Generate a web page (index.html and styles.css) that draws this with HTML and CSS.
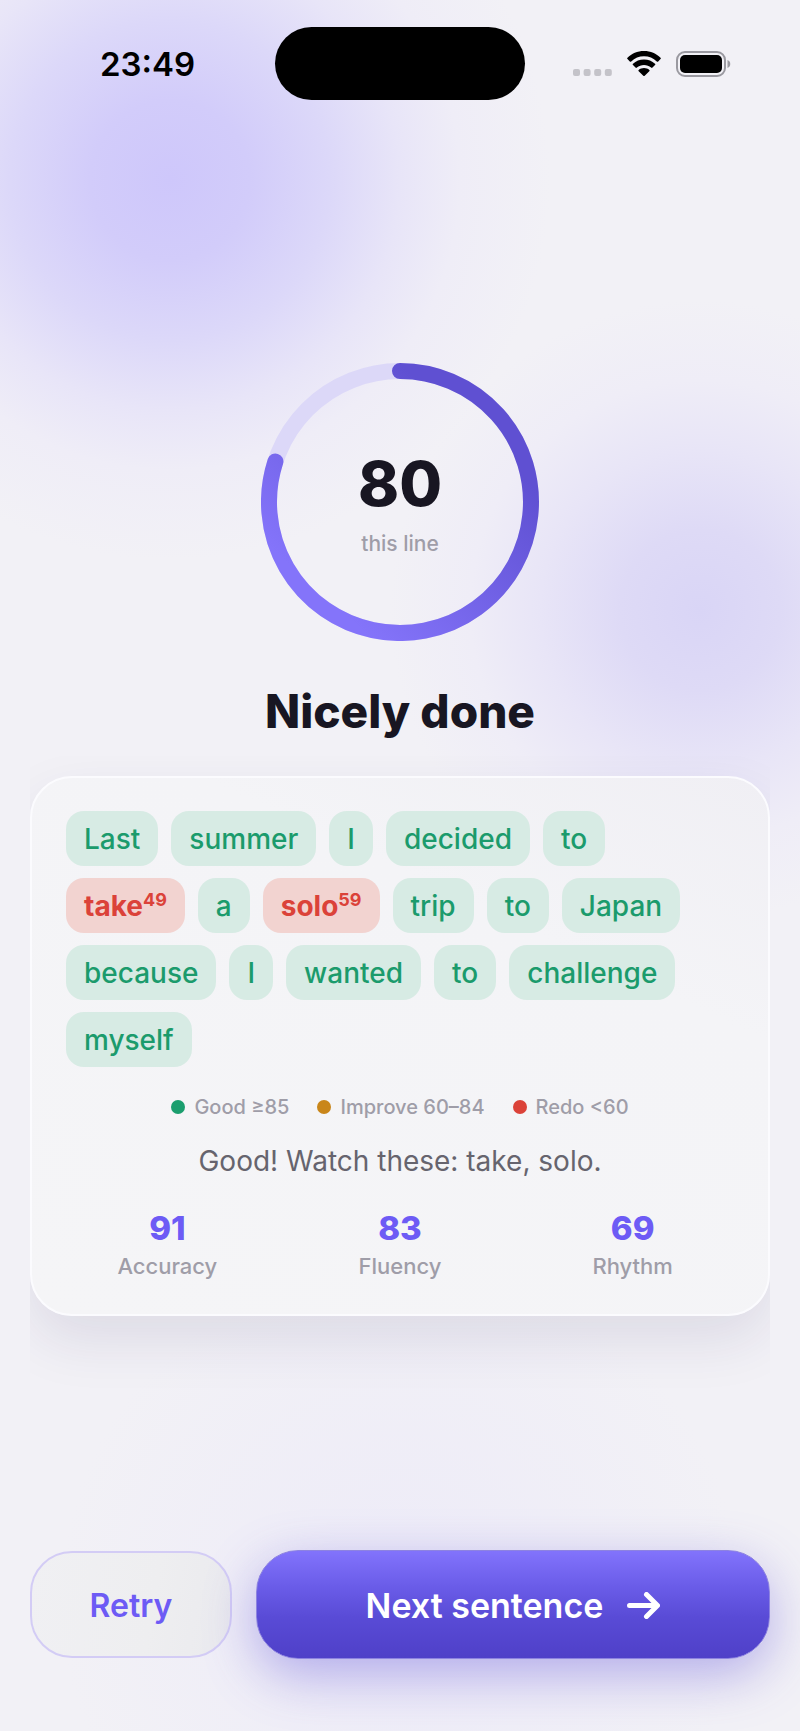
FILE: index.html
```html
<!DOCTYPE html>
<html lang="en">
<head>
<meta charset="utf-8">
<meta name="viewport" content="width=device-width, initial-scale=1">
<title>Line result</title>
<link rel="stylesheet" href="styles.css">
</head>
<body>
<div class="screen">
  <header class="status">
    <time class="status-time">23:49</time>
    <div class="island"></div>
    <div class="status-icons">
      <svg class="signal" viewBox="0 0 39 7" aria-hidden="true"><g fill="#c4c3c9"><rect width="7" height="7" rx="2"/><rect x="10.6" width="7" height="7" rx="2"/><rect x="21.2" width="7" height="7" rx="2"/><rect x="31.8" width="7" height="7" rx="2"/></g></svg>
      <svg class="wifi" viewBox="0 0 34 25" aria-hidden="true"><path d="M17 0C23.600 0 29.400 2.600 33.500 6.700Q34.200 7.400 33.500 8.100L31.200 10.400Q30.500 11.100 29.800 10.400C26.400 7.200 21.900 5.300 17 5.300S7.600 7.200 4.200 10.400Q3.500 11.100 2.800 10.400L.5 8.100Q-.2 7.400 .5 6.700C4.600 2.600 10.400 0 17 0ZM17 8.500C21.300 8.500 25.100 10.100 28 12.700Q28.700 13.400 28 14.100L25.500 16.600Q24.800 17.200 24.100 16.600C22.200 14.900 19.700 13.900 17 13.900S11.800 14.900 9.900 16.600Q9.200 17.200 8.500 16.600L6 14.100Q5.300 13.400 6 12.700C8.900 10.100 12.700 8.500 17 8.500ZM17 17C19 17 20.900 17.700 22.300 18.900Q23 19.600 22.300 20.300L17.700 24.700Q17 25.300 16.300 24.700L11.700 20.300Q11 19.600 11.700 18.900C13.100 17.700 15 17 17 17Z"/></svg>
      <svg class="battery" viewBox="0 0 55 26" aria-hidden="true"><rect x="1" y="1" width="48" height="24" rx="8" fill="none" stroke="#9a99a0" stroke-width="2"/><rect x="4" y="4" width="42" height="18" rx="5"/><path d="M51.500 9C55.200 10.200 55.200 15.800 51.500 17Z" fill="#9a99a0"/></svg>
    </div>
  </header>

  <main class="result">
    <section class="ring" aria-label="Score 80">
      <svg class="ring-art" viewBox="0 0 278 278" aria-hidden="true">
        <defs><linearGradient id="arc" gradientUnits="userSpaceOnUse" x1="65" y1="235" x2="215" y2="70"><stop offset="0" stop-color="#8474fa"/><stop offset="1" stop-color="#5f50d2"/></linearGradient></defs>
        <circle cx="139" cy="139" r="131" fill="none" stroke="#dcd8f8" stroke-width="16"/>
        <path d="M139 8A131 131 0 1 1 14.400 98.500" fill="none" stroke="url(#arc)" stroke-width="16" stroke-linecap="round"/>
      </svg>
      <div class="ring-text">
        <strong class="score">80</strong>
        <span class="caption">this line</span>
      </div>
    </section>
    <h1 class="title">Nicely done</h1>
    <div class="card-clip">
      <section class="card">
        <ul class="words">
          <li class="word">Last</li><li class="word">summer</li><li class="word">I</li><li class="word">decided</li><li class="word">to</li>
          <li class="word redo">take<sup>49</sup></li><li class="word">a</li><li class="word redo">solo<sup>59</sup></li><li class="word">trip</li><li class="word">to</li><li class="word">Japan</li>
          <li class="word">because</li><li class="word">I</li><li class="word">wanted</li><li class="word">to</li><li class="word">challenge</li>
          <li class="word">myself</li>
        </ul>
        <ul class="legend">
          <li class="key good">Good ≥85</li>
          <li class="key improve">Improve 60–84</li>
          <li class="key again">Redo &lt;60</li>
        </ul>
        <p class="message">Good! Watch these: take, solo.</p>
        <dl class="stats">
          <div class="stat"><dt>Accuracy</dt><dd>91</dd></div>
          <div class="stat"><dt>Fluency</dt><dd>83</dd></div>
          <div class="stat"><dt>Rhythm</dt><dd>69</dd></div>
        </dl>
      </section>
    </div>
  </main>

  <footer class="actions">
    <button class="btn retry" type="button">Retry</button>
    <button class="btn next" type="button">Next sentence
      <svg class="arrow" viewBox="0 0 33 27" aria-hidden="true"><path d="M2.500 13.500H30M19.500 2.500L30.500 13.500L19.500 24.500" fill="none" stroke="#fff" stroke-width="5" stroke-linecap="round" stroke-linejoin="round"/></svg>
    </button>
  </footer>
</div>
</body>
</html>
```
FILE: styles.css
```css
* { box-sizing: border-box; }

body {
  margin: 0;
  font-family: Inter, "Noto Sans", sans-serif;
  color: #181622;
  background: #f2f1f6;
}

ul, dl, dd, p, h1 { margin: 0; padding: 0; }
ul { list-style: none; }

.screen {
  display: flex;
  flex-direction: column;
  min-height: 100vh;
  padding: 0 30px 72px;
  background:
    radial-gradient(circle at 170px 180px, #cec7fb 0, #d2ccfa 80px, #dcd8f9 160px, #e8e5f8 230px, #efedf7 290px, rgba(242, 241, 246, 0) 380px),
    radial-gradient(circle at 700px 610px, #d9d5f6 0, #dedaf6 80px, #e8e5f7 160px, #efedf7 230px, rgba(242, 241, 246, 0) 310px),
    radial-gradient(circle at 400px 1600px, #edebf8 0, rgba(242, 241, 246, 0) 340px),
    #f2f1f6;
}

.status {
  display: grid;
  grid-template-columns: 1fr 250px 1fr;
  align-items: center;
  padding-top: 27px;
}
.status-time {
  padding-left: 70px;
  font-size: 33px;
  font-weight: 600;
  line-height: 40px;
  color: #000;
}
.island { height: 73px; border-radius: 37px; background: #000; }
.status-icons {
  display: flex;
  justify-content: flex-end;
  align-items: center;
  gap: 15px;
  padding-right: 39px;
}
.signal { width: 39px; height: 7px; margin-top: 18px; }
.wifi { width: 34px; height: 25px; }
.battery { width: 55px; height: 26px; }

.result { display: flex; flex-direction: column; align-items: center; padding-top: 263px; }

.ring { display: grid; width: 278px; height: 278px; }
.ring-art, .ring-text { grid-area: 1 / 1; }
.ring-text {
  display: flex;
  flex-direction: column;
  align-items: center;
  justify-content: center;
  gap: 2px;
  padding-top: 6px;
}
.score { font-size: 62px; font-weight: 800; line-height: 76px; }
.caption { font-size: 21px; font-weight: 500; line-height: 40px; color: #9f9da8; }

.title { margin-top: 40px; font-size: 46px; font-weight: 800; line-height: 60px; }

.card-clip { align-self: stretch; margin-top: 35px; clip-path: inset(-20px 0 -80px); }
.card {
  padding: 33px 34px 32px;
  border: 2px solid #fbfbfe;
  border-radius: 42px;
  background: linear-gradient(205deg, #f0eff4 0, #f4f4f7 30%, #f5f5f7 100%);
  box-shadow: 0 24px 56px rgba(40, 34, 90, 0.1);
}

.words { display: flex; flex-wrap: wrap; gap: 12px 13px; padding-right: 24px; }
.word {
  padding: 2px 18px 0;
  border-radius: 18px;
  font-size: 28px;
  font-weight: 500;
  line-height: 53px;
  color: #1b9b6c;
  background: #d7ebe4;
}
.word.redo { font-weight: 700; color: #db4239; background: #f2d3d0; }
.word sup { font-size: 18px; line-height: 0; }

.legend { display: flex; justify-content: center; gap: 28px; margin-top: 24px; }
.key {
  display: flex;
  align-items: center;
  gap: 9px;
  font-size: 20px;
  font-weight: 500;
  line-height: 32px;
  color: #9f9da8;
}
.key::before { content: ""; width: 14px; height: 14px; border-radius: 50%; background: currentColor; }
.good::before { background: #1b9e6e; }
.improve::before { background: #c9861a; }
.again::before { background: #db4239; }

.message { margin-top: 16px; font-size: 28px; line-height: 44px; text-align: center; color: #66646e; }

.stats { display: grid; grid-template-columns: repeat(3, 1fr); gap: 30px; margin-top: 23px; }
.stat { display: flex; flex-direction: column-reverse; align-items: center; }
.stat dt { font-size: 22px; font-weight: 500; line-height: 32px; color: #9f9da8; }
.stat dd { font-size: 33px; font-weight: 800; line-height: 44px; color: #6d5bf5; }

.actions {
  display: grid;
  grid-template-columns: 11fr 28fr;
  align-items: center;
  gap: 24px;
  margin-top: auto;
}
.btn {
  display: flex;
  align-items: center;
  justify-content: center;
  padding: 2px 0 0;
  border-radius: 42px;
  font-family: inherit;
  font-weight: 600;
  cursor: pointer;
}
.retry {
  height: 107px;
  border: 2px solid #d3ccf5;
  font-size: 32px;
  color: #6d5bf5;
  background: linear-gradient(100deg, #f0f0f3, #eeeef0 60%, #eaeaee);
}
.next {
  gap: 24px;
  height: 109px;
  border: 1px solid #8d83e0;
  font-size: 34px;
  color: #fff;
  background: linear-gradient(#8273fc, #6b5de9 32%, #594bd6 62%, #4f40c8);
  box-shadow: 0 16px 52px rgba(88, 72, 214, 0.4);
}
.arrow { width: 33px; height: 27px; }
```
